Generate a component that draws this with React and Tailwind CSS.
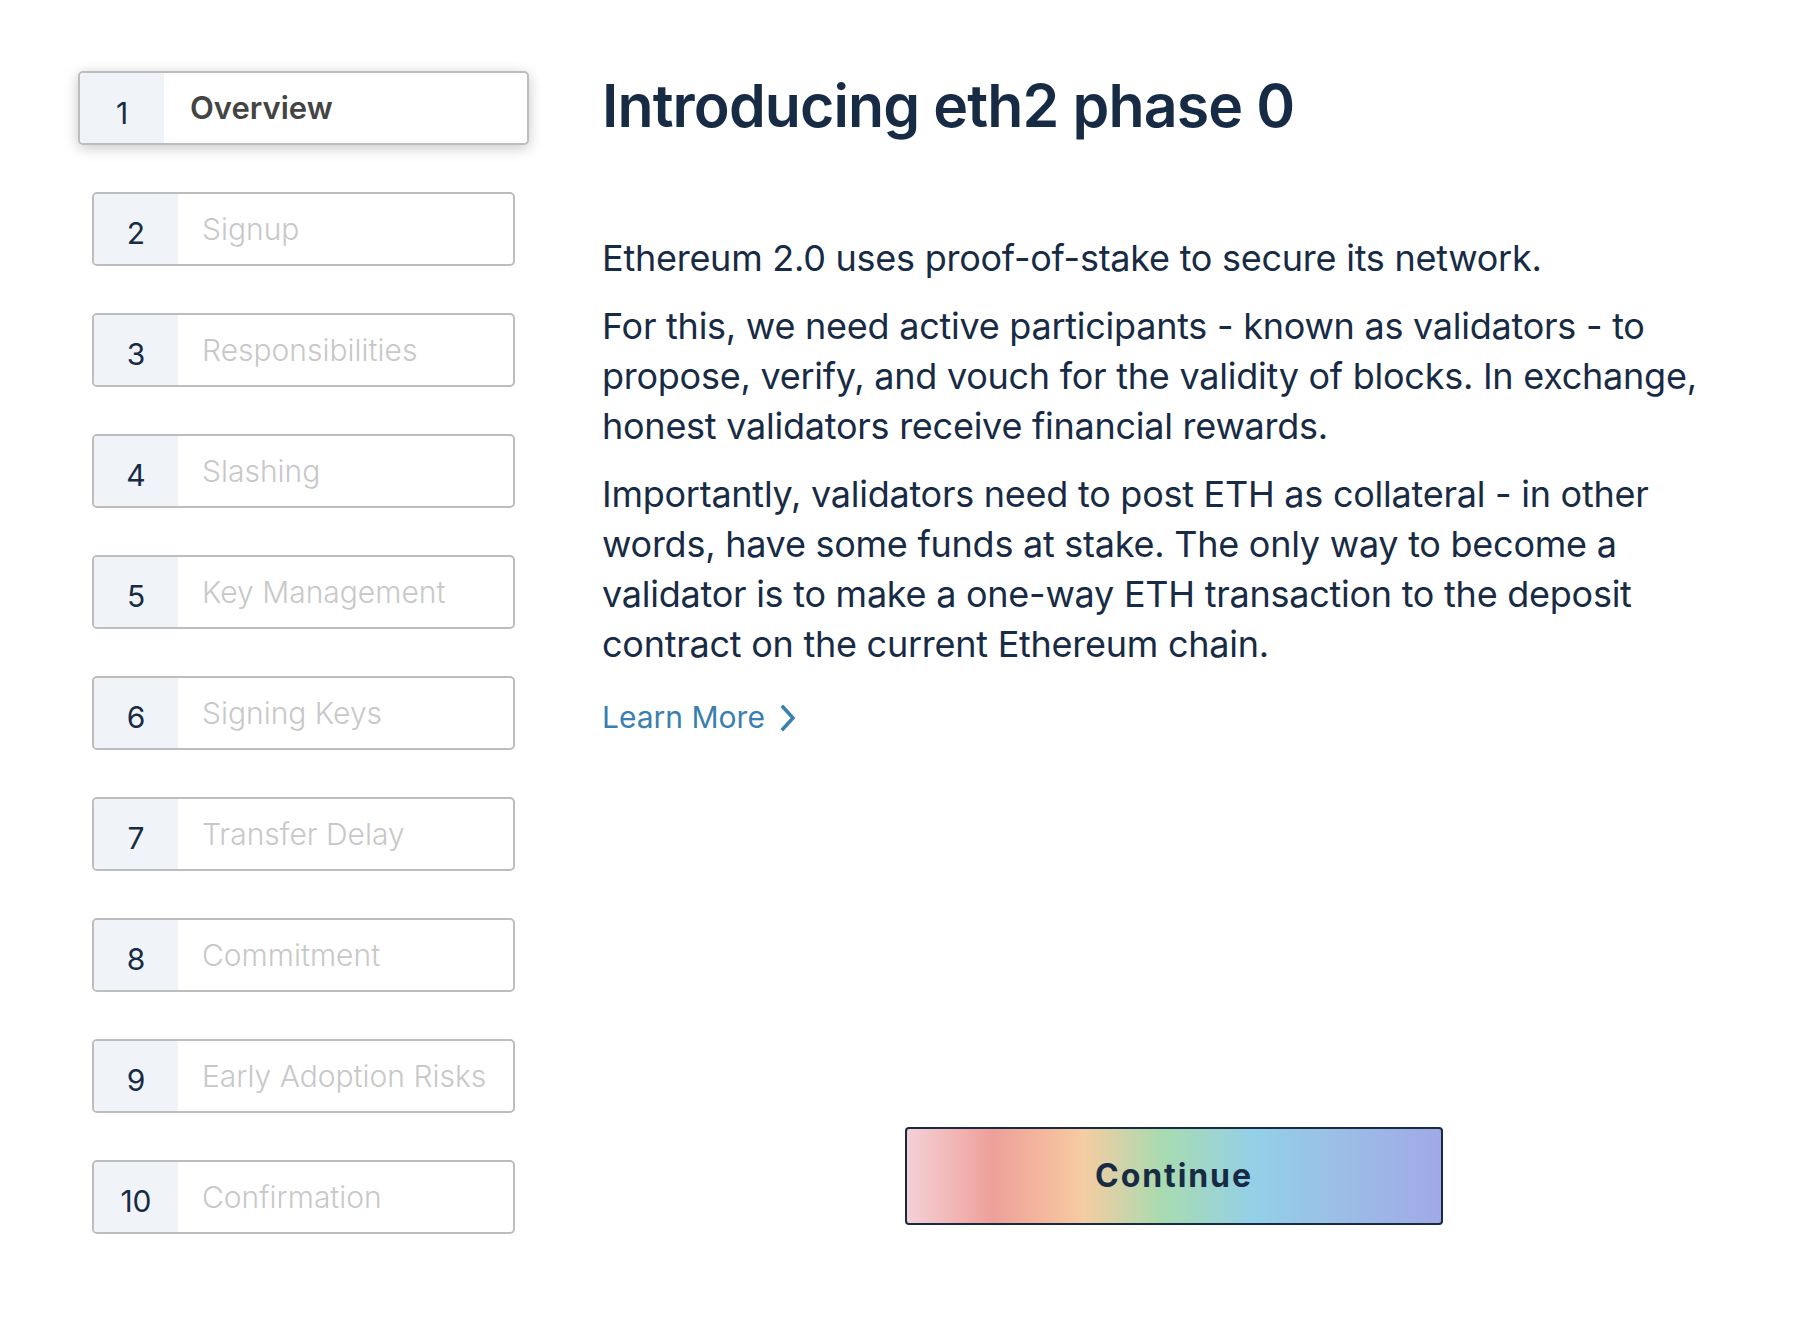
const steps = [
  'Overview',
  'Signup',
  'Responsibilities',
  'Slashing',
  'Key Management',
  'Signing Keys',
  'Transfer Delay',
  'Commitment',
  'Early Adoption Risks',
  'Confirmation',
]

const font = { fontFamily: 'Inter, "Noto Sans", sans-serif' }

function StepItem({ index, label, active }) {
  if (active) {
    return (
      <div className="-mx-[14px] flex h-[74px] overflow-hidden rounded-[5px] border-2 border-[#bdbdbd] bg-white shadow-[0_3px_14px_rgba(0,0,0,0.22)]">
        <div className="flex w-[84px] shrink-0 items-end justify-center bg-[#f0f4f8] pb-[15px] text-[30px] leading-none text-[#182b45]">
          {index}
        </div>
        <div className="flex items-center pl-[26px] text-[31px] font-semibold text-[#444444]">
          {label}
        </div>
      </div>
    )
  }
  return (
    <div className="flex h-[74px] overflow-hidden rounded-[5px] border-2 border-[#bdbdbd] bg-white">
      <div className="flex w-[84px] shrink-0 items-end justify-center bg-[#f0f4f8] pb-[16px] text-[30px] leading-none text-[#182b45]">
        {index}
      </div>
      <div className="flex items-center pl-[24px] text-[30px] font-light text-[#c8c8c8]">
        {label}
      </div>
    </div>
  )
}

export default function App() {
  return (
    <div className="flex min-h-[1342px] bg-white pl-[92px] pr-[68px] pt-[71px]" style={font}>
      <div className="flex w-[423px] shrink-0 flex-col gap-[47px]">
        {steps.map((label, i) => (
          <StepItem key={label} index={i + 1} label={label} active={i === 0} />
        ))}
      </div>

      <div className="ml-[87px] flex flex-1 flex-col pb-[117px] text-[#182b45]">
        <h1 className="text-[59px] font-semibold leading-[1.2] tracking-[-0.015em]">
          Introducing eth2 phase 0
        </h1>
        <div className="mt-[91px] text-[36px] leading-[50px] tracking-[-0.007em]">
          <p>Ethereum 2.0 uses proof-of-stake to secure its network.</p>
          <p className="mt-[18px]">
            For this, we need active participants - known as validators - to propose,
            verify, and vouch for the validity of blocks. In exchange, honest validators
            receive financial rewards.
          </p>
          <p className="mt-[18px]">
            Importantly, validators need to post ETH as collateral - in other words, have
            some funds at stake. The only way to become a validator is to make a one-way ETH
            transaction to the deposit contract on the current Ethereum chain.
          </p>
        </div>
        <a className="mt-[26px] flex items-center gap-[15px] text-[30px] text-[#3a7fae]" href="#">
          Learn More
          <svg width="16" height="26" viewBox="0 0 16 26" fill="none" className="mt-[2px]">
            <polyline
              points="3,2 13,13 3,24"
              stroke="currentColor"
              strokeWidth="3.5"
              strokeLinecap="square"
              strokeLinejoin="miter"
            />
          </svg>
        </a>

        <div className="mt-auto flex justify-center">
          <button className="flex h-[98px] w-[538px] items-center justify-center rounded-[4px] border-2 border-[#182b45] bg-[linear-gradient(90deg,#f5d0d7_0%,#eea09a_16%,#f4b69d_25%,#f6cca2_33%,#a8dbb0_48%,#93d0e8_65%,#9bbfe6_80%,#a1a9e6_100%)] text-[32px] font-bold tracking-[0.06em] text-[#182b45]">
            Continue
          </button>
        </div>
      </div>
    </div>
  )
}
